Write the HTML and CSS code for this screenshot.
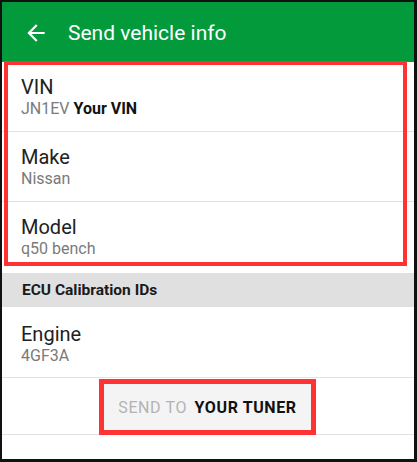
FILE: index.html
```html
<!DOCTYPE html>
<html>
  <head>
    <meta charset="UTF-8" />
    <title>Send vehicle info</title>
    <link rel="stylesheet" href="styles.css">
  </head>

  <body>
    <div class="frame">
      <div class="toolbar">
        <svg class="back" width="26" height="26" viewBox="0 0 24 24">
          <path d="M20 11H7.83l5.59-5.59L12 4l-8 8 8 8 1.41-1.41L7.83 13H20v-2z" fill="#fff" />
        </svg>
        <span class="title">Send vehicle info</span>
      </div>

      <div class="group marked">
        <div class="row">
          <div class="label">VIN</div>
          <div class="value">JN1EV <b class="strong">Your VIN</b></div>
        </div>
        <div class="row">
          <div class="label">Make</div>
          <div class="value">Nissan</div>
        </div>
        <div class="row last">
          <div class="label">Model</div>
          <div class="value">q50 bench</div>
        </div>
      </div>

      <div class="section">ECU Calibration IDs</div>

      <div class="row engine">
        <div class="label">Engine</div>
        <div class="value">4GF3A</div>
      </div>

      <div class="actions">
        <div class="marked-btn">
          <button type="button" class="send"><span class="dim">Send to</span> <span class="target">Your tuner</span></button>
        </div>
      </div>
    </div>
  </body>
</html>
```

FILE: styles.css
```css
html,
body {
  margin: 0;
  padding: 0;
  background: #fff;
}

.frame {
  width: 417px;
  height: 462px;
  box-sizing: border-box;
  border: 2px solid #111;
  border-right-width: 3px;
  border-bottom-width: 3px;
  font-family: Roboto, "Liberation Sans", sans-serif;
  overflow: hidden;
}

.toolbar {
  height: 60px;
  background: #029a3b;
  display: flex;
  align-items: center;
  color: #fff;
}

.back {
  margin-left: 21px;
  margin-top: 1px;
}

.title {
  margin-left: 19px;
  font-size: 21px;
  margin-top: 2px;
}

.group {
  position: relative;
}

.marked::after {
  content: "";
  position: absolute;
  top: -1px;
  left: 2px;
  right: 7px;
  bottom: 6px;
  border: 4px solid #ff3333;
}

.row {
  height: 70px;
  box-sizing: border-box;
  padding: 13px 19px 0;
  border-bottom: 1px solid #e2e2e2;
}

.row.last {
  border-bottom: none;
}

.label {
  font-size: 20px;
  line-height: 24px;
  color: #212121;
}

.value {
  font-size: 16px;
  line-height: 20px;
  color: #7a7a7a;
}

.strong {
  color: #111;
  font-weight: 700;
}

.section {
  height: 34px;
  margin-top: 1px;
  background: #e0e0e0;
  padding-left: 20px;
  font-size: 15.5px;
  font-weight: 700;
  line-height: 35px;
  color: #1a1a1a;
}

.row.engine {
  height: 71px;
  padding-top: 15px;
}

.actions {
  height: 57px;
  border-bottom: 1px solid #e2e2e2;
  display: flex;
  justify-content: center;
  align-items: flex-start;
  padding-top: 1px;
  box-sizing: border-box;
}

.marked-btn {
  border: 5px solid #ff3333;
  margin-left: -1px;
}

.send {
  display: block;
  width: 207px;
  height: 46px;
  border: none;
  background: #f4f4f4;
  font-family: Roboto, "Liberation Sans", sans-serif;
  font-size: 16px;
  letter-spacing: 0.6px;
  text-transform: uppercase;
  padding: 0;
}

.dim {
  color: #b3b3b3;
  font-weight: 400;
  margin-right: 3px;
}

.target {
  color: #111;
  font-weight: 700;
}
```
